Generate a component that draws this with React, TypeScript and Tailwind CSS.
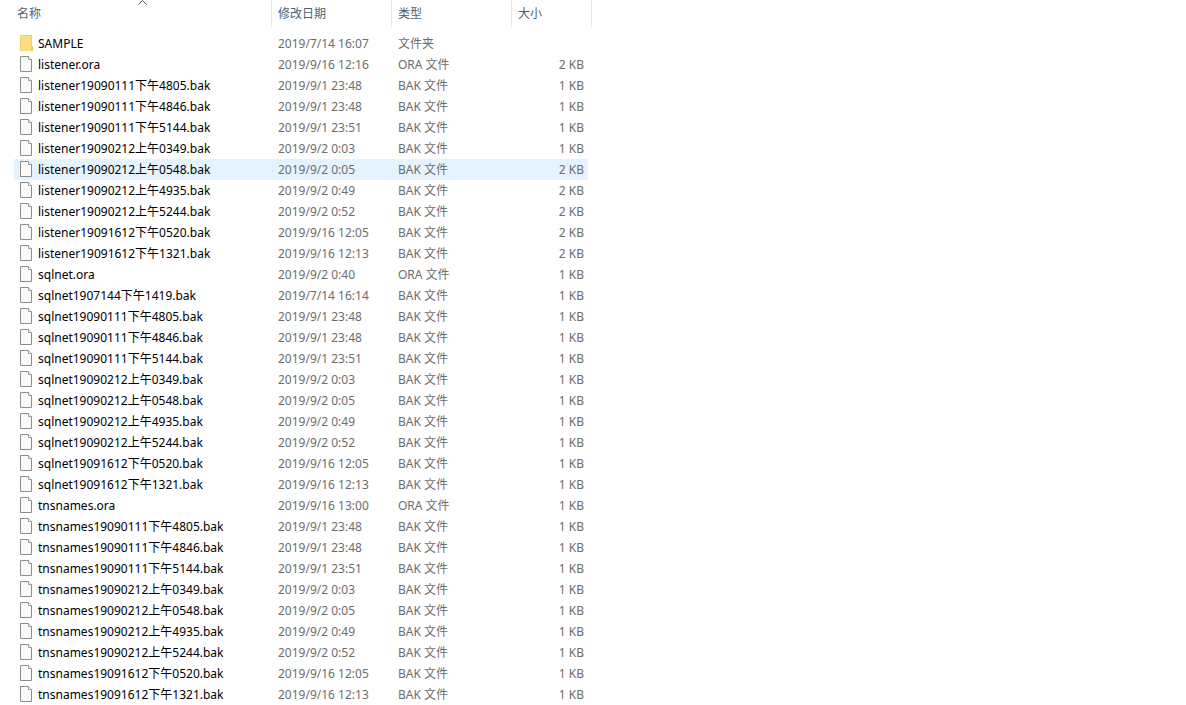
import { useState } from "react";

interface FileItem {
  name: string;
  date: string;
  type: string;
  size: string;
}

const files: FileItem[] = [
  { name: "SAMPLE", date: "2019/7/14 16:07", type: "文件夹", size: "" },
  { name: "listener.ora", date: "2019/9/16 12:16", type: "ORA 文件", size: "2 KB" },
  { name: "listener19090111下午4805.bak", date: "2019/9/1 23:48", type: "BAK 文件", size: "1 KB" },
  { name: "listener19090111下午4846.bak", date: "2019/9/1 23:48", type: "BAK 文件", size: "1 KB" },
  { name: "listener19090111下午5144.bak", date: "2019/9/1 23:51", type: "BAK 文件", size: "1 KB" },
  { name: "listener19090212上午0349.bak", date: "2019/9/2 0:03", type: "BAK 文件", size: "1 KB" },
  { name: "listener19090212上午0548.bak", date: "2019/9/2 0:05", type: "BAK 文件", size: "2 KB" },
  { name: "listener19090212上午4935.bak", date: "2019/9/2 0:49", type: "BAK 文件", size: "2 KB" },
  { name: "listener19090212上午5244.bak", date: "2019/9/2 0:52", type: "BAK 文件", size: "2 KB" },
  { name: "listener19091612下午0520.bak", date: "2019/9/16 12:05", type: "BAK 文件", size: "2 KB" },
  { name: "listener19091612下午1321.bak", date: "2019/9/16 12:13", type: "BAK 文件", size: "2 KB" },
  { name: "sqlnet.ora", date: "2019/9/2 0:40", type: "ORA 文件", size: "1 KB" },
  { name: "sqlnet1907144下午1419.bak", date: "2019/7/14 16:14", type: "BAK 文件", size: "1 KB" },
  { name: "sqlnet19090111下午4805.bak", date: "2019/9/1 23:48", type: "BAK 文件", size: "1 KB" },
  { name: "sqlnet19090111下午4846.bak", date: "2019/9/1 23:48", type: "BAK 文件", size: "1 KB" },
  { name: "sqlnet19090111下午5144.bak", date: "2019/9/1 23:51", type: "BAK 文件", size: "1 KB" },
  { name: "sqlnet19090212上午0349.bak", date: "2019/9/2 0:03", type: "BAK 文件", size: "1 KB" },
  { name: "sqlnet19090212上午0548.bak", date: "2019/9/2 0:05", type: "BAK 文件", size: "1 KB" },
  { name: "sqlnet19090212上午4935.bak", date: "2019/9/2 0:49", type: "BAK 文件", size: "1 KB" },
  { name: "sqlnet19090212上午5244.bak", date: "2019/9/2 0:52", type: "BAK 文件", size: "1 KB" },
  { name: "sqlnet19091612下午0520.bak", date: "2019/9/16 12:05", type: "BAK 文件", size: "1 KB" },
  { name: "sqlnet19091612下午1321.bak", date: "2019/9/16 12:13", type: "BAK 文件", size: "1 KB" },
  { name: "tnsnames.ora", date: "2019/9/16 13:00", type: "ORA 文件", size: "1 KB" },
  { name: "tnsnames19090111下午4805.bak", date: "2019/9/1 23:48", type: "BAK 文件", size: "1 KB" },
  { name: "tnsnames19090111下午4846.bak", date: "2019/9/1 23:48", type: "BAK 文件", size: "1 KB" },
  { name: "tnsnames19090111下午5144.bak", date: "2019/9/1 23:51", type: "BAK 文件", size: "1 KB" },
  { name: "tnsnames19090212上午0349.bak", date: "2019/9/2 0:03", type: "BAK 文件", size: "1 KB" },
  { name: "tnsnames19090212上午0548.bak", date: "2019/9/2 0:05", type: "BAK 文件", size: "1 KB" },
  { name: "tnsnames19090212上午4935.bak", date: "2019/9/2 0:49", type: "BAK 文件", size: "1 KB" },
  { name: "tnsnames19090212上午5244.bak", date: "2019/9/2 0:52", type: "BAK 文件", size: "1 KB" },
  { name: "tnsnames19091612下午0520.bak", date: "2019/9/16 12:05", type: "BAK 文件", size: "1 KB" },
  { name: "tnsnames19091612下午1321.bak", date: "2019/9/16 12:13", type: "BAK 文件", size: "1 KB" },
];

const columns = [
  { header: "名称", padding: "pl-[3px]" },
  { header: "修改日期", padding: "pl-1.5" },
  { header: "类型", padding: "pl-1.5" },
  { header: "大小", padding: "pl-1.5" },
];

const FolderIcon = () => (
  <svg width="14" height="18" viewBox="0 0 14 18" className="shrink-0" aria-hidden="true">
    <path d="M0 0H12V11L13 12V16H0Z" fill="#fbdf7e" />
    <path d="M0.5 16V0.5H11.5V11" fill="none" stroke="#f0cf6c" />
    <path d="M11 11H12L13 12V16H11Z" fill="#ecc967" />
  </svg>
);

const FileIcon = () => (
  <svg width="14" height="18" viewBox="0 0 14 18" className="shrink-0" aria-hidden="true">
    <path d="M0.5 0.5H8.5L11.5 3.5V15.5H0.5Z" fill="#fafafa" stroke="#8c8c8c" />
    <path d="M8.5 0.5V3.5H11.5" fill="#ffffff" stroke="#9c9c9c" />
  </svg>
);

const SortArrow = () => (
  <svg width="9" height="5" viewBox="0 0 9 5" aria-hidden="true">
    <path d="M0.5 4.5L4.5 0.5L8.5 4.5" fill="none" stroke="#505050" />
  </svg>
);

const App: React.FC = () => {
  const [ascending, setAscending] = useState<boolean>(true);
  const [selected, setSelected] = useState<string>("listener19090212上午0548.bak");

  const rows = ascending ? files : [...files].reverse();

  const renderRow = (item: FileItem) => (
    <tr
      key={item.name}
      onClick={() => setSelected(item.name)}
      className="h-[21px] text-[#6d6d6d]"
    >
      <td className={item.name === selected ? "bg-[#e5f3ff] p-0" : "p-0"}>
        <div className="flex items-center gap-1 pl-1.5 text-black">
          {item.type === "文件夹" ? <FolderIcon /> : <FileIcon />}
          <span>{item.name}</span>
        </div>
      </td>
      <td className={item.name === selected ? "bg-[#e5f3ff] p-0 pl-1.5" : "p-0 pl-1.5"}>
        {item.date}
      </td>
      <td className={item.name === selected ? "bg-[#e5f3ff] p-0 pl-1.5" : "p-0 pl-1.5"}>
        {item.type}
      </td>
      <td
        className={
          item.name === selected
            ? "bg-[#e5f3ff] p-0 pr-1 text-right"
            : "p-0 pr-1 text-right"
        }
      >
        {item.size}
      </td>
      <td className="p-0"></td>
    </tr>
  );

  return (
    <main className="min-h-screen overflow-x-auto bg-white pl-3.5 font-['Noto_Sans','Noto_Sans_CJK_SC',sans-serif] text-xs leading-5">
      <table className="w-[578px] table-fixed border-collapse whitespace-nowrap">
        <colgroup>
          <col className="w-[258px]" />
          <col className="w-[120px]" />
          <col className="w-[120px]" />
          <col className="w-[76px]" />
          <col className="w-1" />
        </colgroup>
        <thead>
          <tr>
            {columns.map((column, index) => (
              <th
                key={column.header}
                colSpan={index === 3 ? 2 : 1}
                className="p-0 pb-1.5 text-left font-normal text-[#4c607a]"
              >
                <button
                  type="button"
                  onClick={() => setAscending(!ascending)}
                  className="flex h-[27px] w-full flex-col border-r border-[#e5e5e5] text-left"
                >
                  <span className={index === 0 ? "flex h-1 w-full justify-center" : "h-1"}>
                    {index === 0 && <SortArrow />}
                  </span>
                  <span className={column.padding}>{column.header}</span>
                </button>
              </th>
            ))}
          </tr>
        </thead>
        <tbody>{rows.map(renderRow)}</tbody>
      </table>
    </main>
  );
};

export default App;
